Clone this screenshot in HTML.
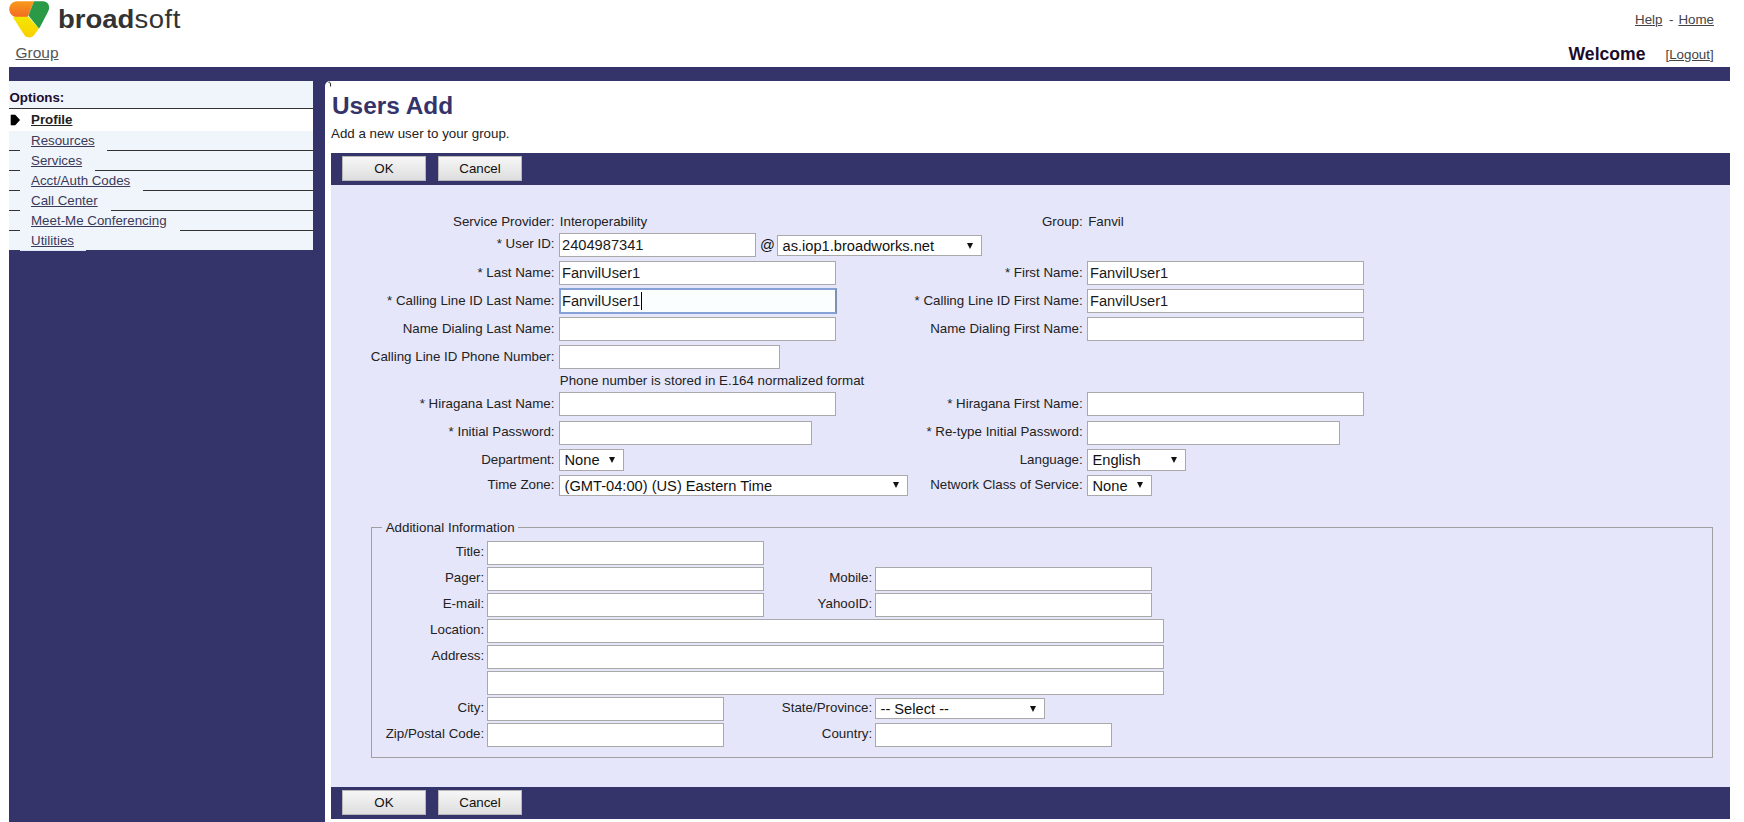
<!DOCTYPE html>
<html><head><meta charset="utf-8"><style>
html,body{margin:0;padding:0}
body{width:1744px;height:822px;overflow:hidden;position:relative;background:#fff;font-family:"Liberation Sans",sans-serif}
.t{position:absolute;white-space:nowrap;line-height:normal}
.b{position:absolute}
u{text-decoration:underline;text-underline-offset:1px}
.btn{position:absolute;width:84px;height:25px;box-sizing:border-box;border:1px solid #b8b8b8;background:linear-gradient(#f6f6f6,#dedede);font-size:13.33px;color:#111;text-align:center;line-height:23px}
</style></head><body>
<svg class="b" style="left:0px;top:0px" width="56" height="42" viewBox="0 0 56 42">
<defs><linearGradient id="og" x1="0" y1="0" x2="0" y2="1"><stop offset="0" stop-color="#f89a1c"/><stop offset="1" stop-color="#f26b21"/></linearGradient>
<linearGradient id="yg" x1="0" y1="0" x2="0" y2="1"><stop offset="0" stop-color="#f2e600"/><stop offset="1" stop-color="#fbd000"/></linearGradient></defs>
<path d="M34,1.3 L17,1.3 C12.2,1.3 9.3,5 9.3,9.2 C9.3,13.6 12.6,17 17,17 L27.6,17 Z" fill="url(#og)"/>
<path d="M12.8,16.8 L28.2,16.8 L38.9,28.6 L33.8,35.6 C31.4,38.2 27,38.2 24.6,35.6 L14,19 Z" fill="url(#yg)"/>
<path d="M34,1.3 L43,1.3 C47.5,1.3 50,5.5 48.9,9.6 C48.3,11.6 46.5,15 40.2,26.8 C39.6,28 38.9,28.6 38.9,28.6 L28.4,15.6 Z" fill="#2a9a46"/>
</svg>
<div class="t" style="left:58.00px;top:5.38px;font-size:25px;font-weight:400;color:#333;transform:scaleX(1.1);transform-origin:0 0"><b style="font-weight:700">broad</b><span style="letter-spacing:0.5px">soft</span></div>
<div class="t" style="left:1635.00px;top:11.74px;font-size:13.33px;font-weight:400;color:#444;"><u>Help</u></div>
<div class="t" style="left:1669.00px;top:11.74px;font-size:13.33px;font-weight:400;color:#444;">-</div>
<div class="t" style="left:1678.40px;top:11.74px;font-size:13.33px;font-weight:400;color:#444;"><u>Home</u></div>
<div class="t" style="left:15.50px;top:43.97px;font-size:15.5px;font-weight:400;color:#555;"><u>Group</u></div>
<div class="t" style="right:98.50px;top:44.07px;font-size:17.6px;font-weight:700;color:#1c0c2c;">Welcome</div>
<div class="t" style="right:30.40px;top:46.64px;font-size:13.33px;font-weight:400;color:#444;">[<u>Logout</u>]</div>
<div class="b" style="left:9px;top:67px;width:1721px;height:14px;background:#34336a"></div>
<div class="b" style="left:9px;top:80px;width:316px;height:742px;background:#34336a"></div>
<div class="b" style="left:325px;top:80px;width:20px;height:20px;background:#34336a"></div>
<div class="b" style="left:9px;top:81px;width:304px;height:169px;background:#f0f5fc"></div>
<div class="b" style="left:20px;top:250px;width:66px;height:1px;background:#dfe6f3"></div>
<div class="b" style="left:9px;top:109px;width:304px;height:22px;background:#fff"></div>
<div class="b" style="left:325px;top:81px;width:1405px;height:741px;background:#fff;border-top-left-radius:5px"></div>
<svg class="b" style="left:320px;top:78px" width="20" height="12"><path d="M8.5,4.5 Q10.5,2.5 10.6,8.5" stroke="#222" stroke-width="1" fill="none"/></svg>
<div class="t" style="left:9.50px;top:89.64px;font-size:13.33px;font-weight:700;color:#1c0c2c;">Options:</div>
<div class="b" style="left:9px;top:108px;width:304px;height:1px;background:#333"></div>
<svg class="b" style="left:0;top:100px" width="30" height="30"><path d="M11,15 L15.2,15 L19.7,20 L15.2,25 L11,25 Z" fill="#000" stroke="#000" stroke-width="0.6" stroke-linejoin="round"/></svg>
<div class="t" style="left:31.00px;top:112.44px;font-size:13.33px;font-weight:700;color:#222;"><u>Profile</u></div>
<div class="t" style="left:31.00px;top:132.64px;font-size:13.33px;font-weight:400;color:#3a3a5a;"><u>Resources</u></div>
<div class="b" style="left:9px;top:150px;width:11px;height:1px;background:#333"></div>
<div class="b" style="left:107px;top:150px;width:206px;height:1px;background:#333"></div>
<div class="t" style="left:31.00px;top:152.64px;font-size:13.33px;font-weight:400;color:#3a3a5a;"><u>Services</u></div>
<div class="b" style="left:9px;top:170px;width:11px;height:1px;background:#333"></div>
<div class="b" style="left:95px;top:170px;width:218px;height:1px;background:#333"></div>
<div class="t" style="left:31.00px;top:172.64px;font-size:13.33px;font-weight:400;color:#3a3a5a;"><u>Acct/Auth Codes</u></div>
<div class="b" style="left:9px;top:190px;width:11px;height:1px;background:#333"></div>
<div class="b" style="left:143px;top:190px;width:170px;height:1px;background:#333"></div>
<div class="t" style="left:31.00px;top:192.64px;font-size:13.33px;font-weight:400;color:#3a3a5a;"><u>Call Center</u></div>
<div class="b" style="left:9px;top:210px;width:11px;height:1px;background:#333"></div>
<div class="b" style="left:111px;top:210px;width:202px;height:1px;background:#333"></div>
<div class="t" style="left:31.00px;top:212.64px;font-size:13.33px;font-weight:400;color:#3a3a5a;"><u>Meet-Me Conferencing</u></div>
<div class="b" style="left:9px;top:230px;width:11px;height:1px;background:#333"></div>
<div class="b" style="left:180px;top:230px;width:133px;height:1px;background:#333"></div>
<div class="t" style="left:31.00px;top:232.64px;font-size:13.33px;font-weight:400;color:#3a3a5a;"><u>Utilities</u></div>
<div class="t" style="left:332.00px;top:91.62px;font-size:24.4px;font-weight:700;color:#34336a;">Users Add</div>
<div class="t" style="left:331.00px;top:125.74px;font-size:13.33px;font-weight:400;color:#222;">Add a new user to your group.</div>
<div class="b" style="left:331px;top:153px;width:1399px;height:32px;background:#34336a"></div>
<div class="btn" style="left:342px;top:156px;">OK</div>
<div class="btn" style="left:438px;top:156px;">Cancel</div>
<div class="b" style="left:331px;top:185px;width:1399px;height:602px;background:#e6e6fa"></div>
<div class="b" style="left:331px;top:787px;width:1399px;height:32px;background:#34336a"></div>
<div class="btn" style="left:342px;top:790px;">OK</div>
<div class="btn" style="left:438px;top:790px;">Cancel</div>
<div class="t" style="right:1189.50px;top:213.74px;font-size:13.33px;font-weight:400;color:#222;">Service Provider:</div>
<div class="t" style="left:559.80px;top:213.74px;font-size:13.33px;font-weight:400;color:#222;">Interoperability</div>
<div class="t" style="right:661.30px;top:213.74px;font-size:13.33px;font-weight:400;color:#222;">Group:</div>
<div class="t" style="left:1088.20px;top:213.74px;font-size:13.33px;font-weight:400;color:#222;">Fanvil</div>
<div class="t" style="right:1189.50px;top:236.44px;font-size:13.33px;font-weight:400;color:#222;">* User ID:</div>
<div class="b" style="left:559px;top:233px;width:197px;height:24px;background:#fff;border:1px solid #a9a9a9;box-sizing:border-box;"></div>
<div class="t" style="left:562.00px;top:237.22px;font-size:14.67px;font-weight:400;color:#1a1a1a;">2404987341</div>
<div class="t" style="left:760.00px;top:236.72px;font-size:14.67px;font-weight:400;color:#111;">@</div>
<div class="b" style="left:777px;top:235px;width:205px;height:21px;background:#fff;border:1px solid #a9a9a9;box-sizing:border-box;"></div>
<div class="t" style="left:782.50px;top:238.02px;font-size:14.67px;font-weight:400;color:#111;">as.iop1.broadworks.net</div>
<div class="b" style="left:966.5px;top:242.5px;width:0;height:0;border-left:3.6px solid transparent;border-right:3.6px solid transparent;border-top:6.5px solid #111"></div>
<div class="t" style="right:1189.50px;top:264.64px;font-size:13.33px;font-weight:400;color:#222;">* Last Name:</div>
<div class="b" style="left:559px;top:261px;width:277px;height:24px;background:#fff;border:1px solid #a9a9a9;box-sizing:border-box;"></div>
<div class="t" style="left:562.00px;top:265.22px;font-size:14.67px;font-weight:400;color:#1a1a1a;">FanvilUser1</div>
<div class="t" style="right:661.30px;top:264.64px;font-size:13.33px;font-weight:400;color:#222;">* First Name:</div>
<div class="b" style="left:1087px;top:261px;width:277px;height:24px;background:#fff;border:1px solid #a9a9a9;box-sizing:border-box;"></div>
<div class="t" style="left:1090.00px;top:265.22px;font-size:14.67px;font-weight:400;color:#1a1a1a;">FanvilUser1</div>
<div class="t" style="right:1189.50px;top:292.64px;font-size:13.33px;font-weight:400;color:#222;">* Calling Line ID Last Name:</div>
<div class="b" style="left:559px;top:288px;width:278px;height:26px;background:#fbfeff;border:2px solid #84a2d6;border-right:2px solid #8090b0;box-sizing:border-box;"></div>
<div class="t" style="left:562.00px;top:293.22px;font-size:14.67px;font-weight:400;color:#1a1a1a;">FanvilUser1</div>
<div class="b" style="left:641px;top:292px;width:1px;height:18px;background:#000"></div>
<div class="t" style="right:661.30px;top:292.64px;font-size:13.33px;font-weight:400;color:#222;">* Calling Line ID First Name:</div>
<div class="b" style="left:1087px;top:289px;width:277px;height:24px;background:#fff;border:1px solid #a9a9a9;box-sizing:border-box;"></div>
<div class="t" style="left:1090.00px;top:293.22px;font-size:14.67px;font-weight:400;color:#1a1a1a;">FanvilUser1</div>
<div class="t" style="right:1189.50px;top:320.64px;font-size:13.33px;font-weight:400;color:#222;">Name Dialing Last Name:</div>
<div class="b" style="left:559px;top:317px;width:277px;height:24px;background:#fff;border:1px solid #a9a9a9;box-sizing:border-box;"></div>
<div class="t" style="right:661.30px;top:320.64px;font-size:13.33px;font-weight:400;color:#222;">Name Dialing First Name:</div>
<div class="b" style="left:1087px;top:317px;width:277px;height:24px;background:#fff;border:1px solid #a9a9a9;box-sizing:border-box;"></div>
<div class="t" style="right:1189.50px;top:348.64px;font-size:13.33px;font-weight:400;color:#222;">Calling Line ID Phone Number:</div>
<div class="b" style="left:559px;top:345px;width:221px;height:24px;background:#fff;border:1px solid #a9a9a9;box-sizing:border-box;"></div>
<div class="t" style="left:559.80px;top:373.04px;font-size:13.33px;font-weight:400;color:#222;">Phone number is stored in E.164 normalized format</div>
<div class="t" style="right:1189.50px;top:395.64px;font-size:13.33px;font-weight:400;color:#222;">* Hiragana Last Name:</div>
<div class="b" style="left:559px;top:392px;width:277px;height:24px;background:#fff;border:1px solid #a9a9a9;box-sizing:border-box;"></div>
<div class="t" style="right:661.30px;top:395.64px;font-size:13.33px;font-weight:400;color:#222;">* Hiragana First Name:</div>
<div class="b" style="left:1087px;top:392px;width:277px;height:24px;background:#fff;border:1px solid #a9a9a9;box-sizing:border-box;"></div>
<div class="t" style="right:1189.50px;top:424.14px;font-size:13.33px;font-weight:400;color:#222;">* Initial Password:</div>
<div class="b" style="left:559px;top:420.5px;width:253px;height:24.0px;background:#fff;border:1px solid #a9a9a9;box-sizing:border-box;"></div>
<div class="t" style="right:661.30px;top:424.14px;font-size:13.33px;font-weight:400;color:#222;">* Re-type Initial Password:</div>
<div class="b" style="left:1087px;top:420.5px;width:253px;height:24.0px;background:#fff;border:1px solid #a9a9a9;box-sizing:border-box;"></div>
<div class="t" style="right:1189.50px;top:451.94px;font-size:13.33px;font-weight:400;color:#222;">Department:</div>
<div class="b" style="left:559px;top:449px;width:65px;height:22px;background:#fff;border:1px solid #a9a9a9;box-sizing:border-box;"></div>
<div class="t" style="left:564.50px;top:452.02px;font-size:14.67px;font-weight:400;color:#111;">None</div>
<div class="b" style="left:608.5px;top:456.5px;width:0;height:0;border-left:3.6px solid transparent;border-right:3.6px solid transparent;border-top:6.5px solid #111"></div>
<div class="t" style="right:661.30px;top:451.94px;font-size:13.33px;font-weight:400;color:#222;">Language:</div>
<div class="b" style="left:1087px;top:449px;width:99px;height:22px;background:#fff;border:1px solid #a9a9a9;box-sizing:border-box;"></div>
<div class="t" style="left:1092.50px;top:452.02px;font-size:14.67px;font-weight:400;color:#111;">English</div>
<div class="b" style="left:1170.5px;top:456.5px;width:0;height:0;border-left:3.6px solid transparent;border-right:3.6px solid transparent;border-top:6.5px solid #111"></div>
<div class="t" style="right:1189.50px;top:476.94px;font-size:13.33px;font-weight:400;color:#222;">Time Zone:</div>
<div class="b" style="left:559px;top:474.5px;width:349px;height:21.5px;background:#fff;border:1px solid #a9a9a9;box-sizing:border-box;"></div>
<div class="t" style="left:564.50px;top:477.52px;font-size:14.67px;font-weight:400;color:#111;">(GMT-04:00) (US) Eastern Time</div>
<div class="b" style="left:892.5px;top:482.0px;width:0;height:0;border-left:3.6px solid transparent;border-right:3.6px solid transparent;border-top:6.5px solid #111"></div>
<div class="t" style="right:661.30px;top:476.94px;font-size:13.33px;font-weight:400;color:#222;">Network Class of Service:</div>
<div class="b" style="left:1087px;top:474.5px;width:65px;height:21.5px;background:#fff;border:1px solid #a9a9a9;box-sizing:border-box;"></div>
<div class="t" style="left:1092.50px;top:477.52px;font-size:14.67px;font-weight:400;color:#111;">None</div>
<div class="b" style="left:1136.5px;top:482.0px;width:0;height:0;border-left:3.6px solid transparent;border-right:3.6px solid transparent;border-top:6.5px solid #111"></div>
<div class="b" style="left:371px;top:527px;width:1342px;height:231px;border:1px solid #a0a0a0;border-right-color:#a0a0a0;box-sizing:border-box"></div>
<div class="b" style="left:382px;top:524px;width:136px;height:6px;background:#e6e6fa"></div>
<div class="t" style="left:385.70px;top:519.84px;font-size:13.33px;font-weight:400;color:#222;">Additional Information</div>
<div class="t" style="right:1259.80px;top:544.24px;font-size:13.33px;font-weight:400;color:#222;">Title:</div>
<div class="b" style="left:487px;top:541px;width:277px;height:24px;background:#fff;border:1px solid #a9a9a9;box-sizing:border-box;"></div>
<div class="t" style="right:1259.80px;top:570.24px;font-size:13.33px;font-weight:400;color:#222;">Pager:</div>
<div class="b" style="left:487px;top:567px;width:277px;height:24px;background:#fff;border:1px solid #a9a9a9;box-sizing:border-box;"></div>
<div class="t" style="right:871.80px;top:570.24px;font-size:13.33px;font-weight:400;color:#222;">Mobile:</div>
<div class="b" style="left:875px;top:567px;width:277px;height:24px;background:#fff;border:1px solid #a9a9a9;box-sizing:border-box;"></div>
<div class="t" style="right:1259.80px;top:596.24px;font-size:13.33px;font-weight:400;color:#222;">E-mail:</div>
<div class="b" style="left:487px;top:593px;width:277px;height:24px;background:#fff;border:1px solid #a9a9a9;box-sizing:border-box;"></div>
<div class="t" style="right:871.80px;top:596.24px;font-size:13.33px;font-weight:400;color:#222;">YahooID:</div>
<div class="b" style="left:875px;top:593px;width:277px;height:24px;background:#fff;border:1px solid #a9a9a9;box-sizing:border-box;"></div>
<div class="t" style="right:1259.80px;top:622.24px;font-size:13.33px;font-weight:400;color:#222;">Location:</div>
<div class="b" style="left:487px;top:619px;width:677px;height:24px;background:#fff;border:1px solid #a9a9a9;box-sizing:border-box;"></div>
<div class="t" style="right:1259.80px;top:648.24px;font-size:13.33px;font-weight:400;color:#222;">Address:</div>
<div class="b" style="left:487px;top:645px;width:677px;height:24px;background:#fff;border:1px solid #a9a9a9;box-sizing:border-box;"></div>
<div class="b" style="left:487px;top:671px;width:677px;height:24px;background:#fff;border:1px solid #a9a9a9;box-sizing:border-box;"></div>
<div class="t" style="right:1259.80px;top:700.24px;font-size:13.33px;font-weight:400;color:#222;">City:</div>
<div class="b" style="left:487px;top:697px;width:237px;height:24px;background:#fff;border:1px solid #a9a9a9;box-sizing:border-box;"></div>
<div class="t" style="right:871.80px;top:700.24px;font-size:13.33px;font-weight:400;color:#222;">State/Province:</div>
<div class="b" style="left:875px;top:698px;width:170px;height:21px;background:#fff;border:1px solid #a9a9a9;box-sizing:border-box;"></div>
<div class="t" style="left:880.50px;top:701.02px;font-size:14.67px;font-weight:400;color:#111;">-- Select --</div>
<div class="b" style="left:1029.5px;top:705.5px;width:0;height:0;border-left:3.6px solid transparent;border-right:3.6px solid transparent;border-top:6.5px solid #111"></div>
<div class="t" style="right:1259.80px;top:726.24px;font-size:13.33px;font-weight:400;color:#222;">Zip/Postal Code:</div>
<div class="b" style="left:487px;top:723px;width:237px;height:24px;background:#fff;border:1px solid #a9a9a9;box-sizing:border-box;"></div>
<div class="t" style="right:871.80px;top:726.24px;font-size:13.33px;font-weight:400;color:#222;">Country:</div>
<div class="b" style="left:875px;top:723px;width:237px;height:24px;background:#fff;border:1px solid #a9a9a9;box-sizing:border-box;"></div>
</body></html>
